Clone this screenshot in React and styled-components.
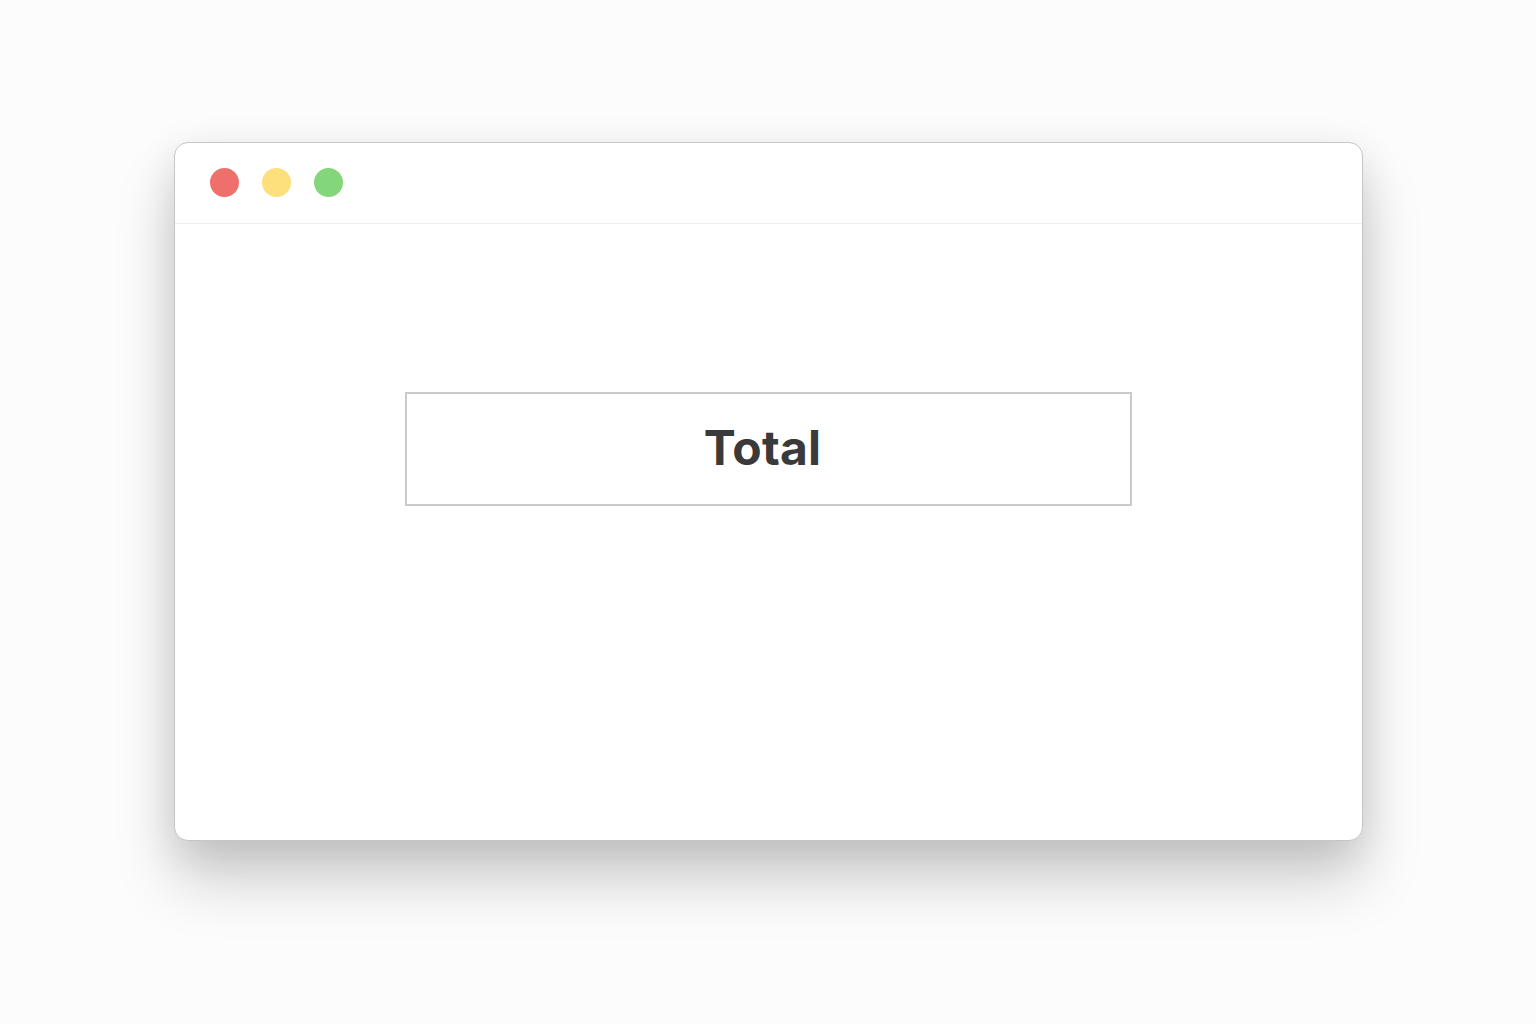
import React from "react";
import styled, { createGlobalStyle } from "styled-components";

const Global = createGlobalStyle`
  html, body { margin: 0; padding: 0; background: #fcfcfc; }
  body { font-family: Inter, "Liberation Sans", sans-serif; }
`;

const Page = styled.div`
  width: 1536px;
  height: 1024px;
  box-sizing: border-box;
  padding: 142px 173px 0 174px;
  background: #fcfcfc;
`;

const Window = styled.div`
  width: 1189px;
  height: 699px;
  box-sizing: border-box;
  background: #ffffff;
  border: 1px solid #c6c6c6;
  border-radius: 14px;
  box-shadow: 0 40px 60px rgba(0, 0, 0, 0.18), 0 10px 40px rgba(0, 0, 0, 0.1);
  display: flex;
  flex-direction: column;
  overflow: hidden;
`;

const TitleBar = styled.div`
  height: 81px;
  flex: none;
  box-sizing: border-box;
  border-bottom: 1px solid #ededed;
  display: flex;
  align-items: center;
  gap: 23px;
  padding: 0 0 1px 35px;
`;

const Dot = styled.span`
  width: 29px;
  height: 29px;
  border-radius: 50%;
  background: ${(p) => p.$color};
`;

const Content = styled.div`
  flex: 1;
  display: flex;
  flex-direction: column;
  align-items: center;
  padding-top: 168px;
`;

const TotalBox = styled.div`
  width: 727px;
  height: 114px;
  box-sizing: border-box;
  border: 2px solid #cacaca;
  display: flex;
  align-items: center;
  justify-content: center;
  padding: 0 12px 4px 0;
  font-size: 48px;
  font-weight: 700;
  color: #3a3a3a;
  letter-spacing: 0.2px;
`;

export default function App() {
  return (
    <>
      <Global />
      <Page>
        <Window>
          <TitleBar>
            <Dot $color="#ef6f6c" />
            <Dot $color="#fde07c" />
            <Dot $color="#84d67a" />
          </TitleBar>
          <Content>
            <TotalBox>Total</TotalBox>
          </Content>
        </Window>
      </Page>
    </>
  );
}
